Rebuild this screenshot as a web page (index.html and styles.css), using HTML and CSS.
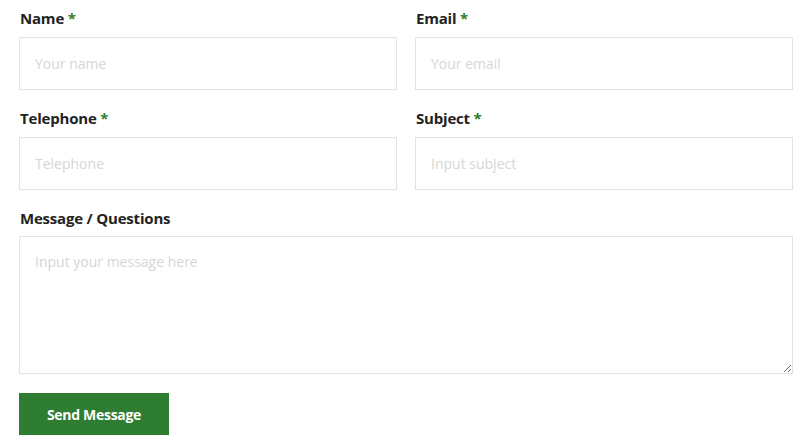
FILE: index.html
```html
<!DOCTYPE html>
<html lang="en">
<head>
<meta charset="utf-8">
<title>Contact form</title>
<link rel="stylesheet" href="styles.css">
</head>
<body>
<form class="form">
  <div class="row">
    <div class="field">
      <label class="label">Name <span class="req">*</span></label>
      <input class="input" type="text" placeholder="Your name">
    </div>
    <div class="field">
      <label class="label">Email <span class="req">*</span></label>
      <input class="input" type="email" placeholder="Your email">
    </div>
  </div>
  <div class="row">
    <div class="field">
      <label class="label">Telephone <span class="req">*</span></label>
      <input class="input" type="text" placeholder="Telephone">
    </div>
    <div class="field">
      <label class="label">Subject <span class="req">*</span></label>
      <input class="input" type="text" placeholder="Input subject">
    </div>
  </div>
  <div class="field field-message">
    <label class="label">Message / Questions</label>
    <textarea class="input textarea" placeholder="Input your message here"></textarea>
  </div>
  <div class="actions">
    <button class="btn" type="button">Send Message</button>
  </div>
</form>
</body>
</html>
```
FILE: styles.css
```css
html, body {
  margin: 0;
  padding: 0;
  background: #fff;
}
body {
  font-family: "Open Sans", "Liberation Sans", sans-serif;
}
.form {
  width: 774px;
  padding: 8px 0 0 19px;
  display: flex;
  flex-direction: column;
  gap: 18px;
}
.row {
  display: grid;
  grid-template-columns: 1fr 1fr;
  column-gap: 18px;
}
.field {
  display: flex;
  flex-direction: column;
  gap: 9px;
}
.field-message {
  gap: 8px;
}
.label {
  font-size: 15px;
  font-weight: 700;
  line-height: 20px;
  color: #222;
  padding-left: 1px;
  letter-spacing: -0.2px;
}
.req {
  color: #2e7d32;
}
.input {
  box-sizing: border-box;
  height: 53px;
  width: 100%;
  border: 1px solid #e3e3e3;
  border-radius: 0;
  padding: 0 15px;
  font-family: "Open Sans", "Liberation Sans", sans-serif;
  font-size: 14px;
  color: #333;
  background: #fff;
  outline: none;
}
.input::placeholder {
  color: #d6d6d6;
}
.textarea {
  height: 138px;
  padding: 15px 15px;
  resize: vertical;
  display: block;
}
.actions {
  margin-top: 1px;
}
.btn {
  width: 150px;
  height: 42px;
  background: #2e7d32;
  color: #fff;
  border: none;
  font-family: "Open Sans", "Liberation Sans", sans-serif;
  font-weight: 700;
  font-size: 14px;
  letter-spacing: -0.3px;
  cursor: pointer;
}
```
